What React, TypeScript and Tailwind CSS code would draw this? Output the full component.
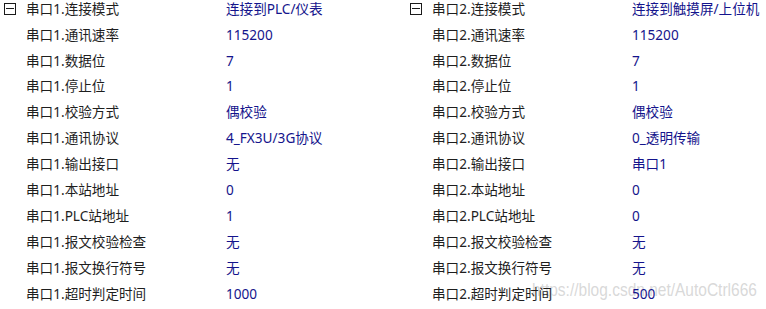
import React from "react";

const ports = [
  {
    n: 1,
    values: ["连接到PLC/仪表", "115200", "7", "1", "偶校验", "4_FX3U/3G协议", "无", "0", "1", "无", "无", "1000"],
  },
  {
    n: 2,
    values: ["连接到触摸屏/上位机", "115200", "7", "1", "偶校验", "0_透明传输", "串口1", "0", "0", "无", "无", "500"],
  },
];

const names = ["连接模式", "通讯速率", "数据位", "停止位", "校验方式", "通讯协议", "输出接口", "本站地址", "PLC站地址", "报文校验检查", "报文换行符号", "超时判定时间"];

function PortGrid({ n, values }: { n: number; values: string[] }) {
  return (
    <div className="flex flex-col -mt-[4px] overflow-hidden">
      {names.map((name, i) => (
        <div key={name} className="flex items-center h-[25.9px] whitespace-nowrap">
          <div className="w-[24px] shrink-0 flex items-center pl-[2px]">
            {i === 0 && (
              <div className="w-[12px] h-[12px] border border-[#1a1a1a] flex items-center justify-center">
                <div className="w-[8px] h-px bg-[#1a1a1a]" />
              </div>
            )}
          </div>
          <div className="w-[200px] shrink-0 text-[#1e1e1e]">
            串口{n}.{name}
          </div>
          <div className="text-[#14148c]">{values[i]}</div>
        </div>
      ))}
    </div>
  );
}

export default function App() {
  return (
    <div
      className="relative w-[766px] h-[309px] bg-white overflow-hidden text-[13.6px]"
      style={{ fontFamily: '"Noto Sans", "Noto Sans CJK SC", sans-serif' }}
    >
      {/* watermark sits under the grid text */}
      <div
        className="absolute left-[532px] top-[282px] text-[15.5px] leading-[16px] scale-y-[1.15] text-[#c8c8c8]/70 whitespace-nowrap pointer-events-none"
        style={{ fontFamily: '"Liberation Sans", sans-serif' }}
      >
        https://blog.csdn.net/AutoCtrl666
      </div>
      <div className="relative grid grid-cols-[406px_1fr] pl-[2px]">
        {ports.map((p) => (
          <PortGrid key={p.n} n={p.n} values={p.values} />
        ))}
      </div>
    </div>
  );
}
